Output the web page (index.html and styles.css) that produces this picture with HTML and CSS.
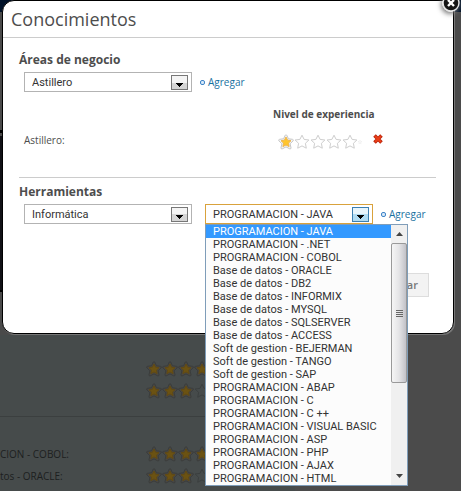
FILE: index.html
```html
<!DOCTYPE html>
<html lang="es">
<head>
<meta charset="utf-8">
<title>Conocimientos</title>
<link rel="stylesheet" href="styles.css">
</head>
<body>
<svg class="defs" aria-hidden="true">
  <symbol id="star" viewBox="0 0 16 16">
    <path d="M8 1.2l2.1 4.2 4.8.6-3.5 3.3.9 4.9L8 11.9l-4.3 2.3.9-4.9L1.1 6l4.8-.6z"/>
  </symbol>
  <symbol id="full-star" viewBox="0 0 16 16">
    <path class="halo" d="M8 .8q.6 0 .9.700l1.500 3.300 4 .5q1.600.4.600 1.600l-2.900 2.900.9 4q.1 1.500-1.300 1L8 12.900l-3.700 1.900q-1.400.5-1.300-1l.9-4L1 6.900Q0 5.700 1.600 5.300l4-.5 1.500-3.300Q7.400.8 8 .8z"/>
    <path class="core" d="M8 3l1.600 3.200 3.400.5-2.500 2.400.6 3.500L8 11l-3.100 1.600.6-3.500L3 6.700l3.400-.5z"/>
  </symbol>
  <symbol id="arrow" viewBox="0 0 15 13">
    <path d="M4 7h7v1h-1v1H9v1H8v1H7v-1H6V9H5V8H4z"/>
  </symbol>
</svg>

<main class="page">
  <div class="page-top"></div>
  <div class="page-side"></div>
  <div class="page-content">
    <section class="page-block">
      <div class="page-row"><span class="page-label"></span><span class="stars dim"><svg><use href="#full-star"/></svg><svg><use href="#full-star"/></svg><svg><use href="#full-star"/></svg><svg><use href="#full-star"/></svg></span></div>
      <div class="page-row"><span class="page-label"></span><span class="stars dim"><svg><use href="#full-star"/></svg><svg><use href="#full-star"/></svg><svg><use href="#full-star"/></svg><svg class="empty"><use href="#star"/></svg></span></div>
    </section>
    <section class="page-block">
      <div class="page-row"><span class="page-label">CION - COBOL:</span><span class="stars dim"><svg><use href="#full-star"/></svg><svg><use href="#full-star"/></svg><svg><use href="#full-star"/></svg><svg><use href="#full-star"/></svg></span></div>
      <div class="page-row"><span class="page-label">tos - ORACLE:</span><span class="stars dim"><svg><use href="#full-star"/></svg><svg><use href="#full-star"/></svg><svg><use href="#full-star"/></svg><svg class="empty"><use href="#star"/></svg></span></div>
    </section>
  </div>
</main>

<div class="dialog" role="dialog" aria-labelledby="title">
  <button class="close" type="button" aria-label="Cerrar">
    <svg viewBox="0 0 18 18"><circle cx="9" cy="9" r="8" fill="#161616" stroke="#e4e4e4" stroke-width="1.5"/><path d="M6 6l6 6M12 6l-6 6" stroke="#fff" stroke-width="2.4"/></svg>
  </button>
  <h1 id="title">Conocimientos</h1>
  <form class="dialog-body">
    <section class="areas">
      <h2><label for="area">Áreas de negocio</label></h2>
      <div class="fields">
        <div class="picker"><select id="area"><option>Astillero</option></select><svg class="arrow"><use href="#arrow"/></svg></div>
        <a class="add" href="#area">Agregar</a>
      </div>
      <div class="levels">
        <span></span><h3>Nivel de experiencia</h3>
        <span class="name">Astillero:</span>
        <div class="rating">
          <span class="stars"><svg><use href="#full-star"/></svg><svg class="empty"><use href="#star"/></svg><svg class="empty"><use href="#star"/></svg><svg class="empty"><use href="#star"/></svg><svg class="empty"><use href="#star"/></svg><svg class="empty cut"><use href="#star"/></svg></span>
          <button class="remove" type="button" aria-label="Quitar"><svg viewBox="0 0 10 10"><path d="M1.500 1.500l7 7M8.500 1.500l-7 7" stroke="#b5210a" stroke-width="3.600"/><path d="M2 2l6 6M8 2L2 8" stroke="#ea3f18" stroke-width="2.200"/></svg></button>
        </div>
      </div>
    </section>
    <section class="tools">
      <h2><label for="tool-type">Herramientas</label></h2>
      <div class="fields">
        <div class="picker"><select id="tool-type"><option>Informática</option></select><svg class="arrow"><use href="#arrow"/></svg></div>
        <div class="picker open">
          <select id="tool" aria-label="Herramienta"><option>PROGRAMACION - JAVA</option></select><svg class="arrow"><use href="#arrow"/></svg>
          <div class="menu">
            <ul role="listbox" aria-label="Herramienta">
              <li role="option" aria-selected="true">PROGRAMACION - JAVA</li>
              <li role="option">PROGRAMACION - .NET</li>
              <li role="option">PROGRAMACION - COBOL</li>
              <li role="option">Base de datos - ORACLE</li>
              <li role="option">Base de datos - DB2</li>
              <li role="option">Base de datos - INFORMIX</li>
              <li role="option">Base de datos - MYSQL</li>
              <li role="option">Base de datos - SQLSERVER</li>
              <li role="option">Base de datos - ACCESS</li>
              <li role="option">Soft de gestion - BEJERMAN</li>
              <li role="option">Soft de gestion - TANGO</li>
              <li role="option">Soft de gestion - SAP</li>
              <li role="option">PROGRAMACION - ABAP</li>
              <li role="option">PROGRAMACION - C</li>
              <li role="option">PROGRAMACION - C ++</li>
              <li role="option">PROGRAMACION - VISUAL BASIC</li>
              <li role="option">PROGRAMACION - ASP</li>
              <li role="option">PROGRAMACION - PHP</li>
              <li role="option">PROGRAMACION - AJAX</li>
              <li role="option">PROGRAMACION - HTML</li>
            </ul>
            <div class="scrollbar">
              <svg class="step" viewBox="0 0 16 18"><path d="M5 11h7L8.500 7z"/></svg>
              <div class="thumb"><i></i><i></i><i></i><i></i></div>
              <svg class="step" viewBox="0 0 16 18"><path d="M5 7h7l-3.500 4z"/></svg>
            </div>
          </div>
        </div>
        <a class="add" href="#tool">Agregar</a>
      </div>
    </section>
    <div class="actions"><button class="save" type="submit">Guardar</button></div>
  </form>
</div>
</body>
</html>
```
FILE: styles.css
```css
*, ::before { box-sizing: border-box; }
body {
  margin: 0;
  min-height: 100vh;
  overflow: hidden;
  background: #4b4b4b;
  color: #4d4d4d;
  font: 10px/14px "Open Sans", sans-serif;
}
h1, h2, h3, ul { margin: 0; padding: 0; }
button { padding: 0; font: inherit; cursor: pointer; }
svg { display: block; }
.defs { position: absolute; width: 0; height: 0; }

/* Dimmed page */
.page { height: 100vh; overflow: hidden; display: flex; flex-direction: column; }
.page-top { flex: none; height: 12px; background: #001229; }
.page-side {
  flex: none;
  height: 323px;
  background: linear-gradient(#4a4a4a 0 118px, #000 118px 121px, #4a4a4a 121px 124px, #101015 124px 278px, #000 278px 280px, #4a4a4a 280px) no-repeat left / 8px 100%;
}
.page-content {
  flex: 1;
  width: 64%;
  padding-top: 23px;
  background: #464b4b;
}
.page-block:first-child { padding-bottom: 14px; border-bottom: 1px solid #3b3f3f; }
.page-block + .page-block { padding-top: 26px; }
.page-row { display: flex; align-items: center; height: 22px; }
.page-label { width: 146px; color: #1d1f1f; }

.stars {
  --halo: #f6f6f6;
  --halo-line: #c6c6c6;
  --core: #ffc52b;
  --core-line: #efb64d;
  --empty-line: #cecece;
  display: flex;
}
.stars.dim {
  --halo: #4a4845;
  --halo-line: #3b3d3c;
  --core: #6b5212;
  --core-line: #604914;
  --empty-line: #3b3f3f;
}
.stars svg { width: 16px; height: 16px; flex: none; }
.halo { fill: var(--halo); stroke: var(--halo-line); stroke-width: 1; }
.core { fill: var(--core); stroke: var(--core-line); stroke-width: 1; }
.empty { fill: none; stroke: var(--empty-line); stroke-width: 1; }
.stars .cut { width: 4px; }
.cut use { width: 16px; height: 16px; }

/* Dialog */
.dialog {
  position: absolute;
  top: 0;
  left: 2px;
  right: 7px;
  border: 1px solid #000;
  border-radius: 12px;
  background: #fff;
  box-shadow: 1px 1px 0 #777;
}
.close {
  position: absolute;
  top: -7px;
  right: -7px;
  width: 18px;
  height: 18px;
  border: 0;
  border-radius: 50%;
  background: none;
  box-shadow: -1px 2px 5px #777;
}
h1 {
  height: 37px;
  padding: 6px 8px 0;
  border-bottom: 1px solid #ccc;
  font-size: 18px;
  line-height: 24px;
  font-weight: 500;
}
.dialog-body { display: block; padding: 14px 17px 36px 16px; }
h2 { font-size: 12px; line-height: 16px; font-weight: 700; }
.areas { height: 126px; border-bottom: 1px solid #ccc; }
.fields { display: flex; align-items: center; padding: 4px 0 0 5px; }
.picker { position: relative; width: 168px; }
.picker select {
  appearance: none;
  display: block;
  width: 100%;
  height: 20px;
  margin: 0;
  padding: 2px 7px 0;
  border: 1px solid #b3b3b3;
  border-radius: 0;
  outline: 0;
  background: #fff;
  color: #333;
  font: 11px/16px Roboto, sans-serif;
}
.arrow {
  position: absolute;
  top: 3px;
  right: 4px;
  width: 17px;
  height: 15px;
  border: 1px solid #777;
  background: linear-gradient(#f4f4f4 50%, #d5d5d5 50%);
  pointer-events: none;
}
.open { margin-left: 13px; }
.open select { border-color: #d9a23c; }
.open .arrow { border-color: #3c7fb1; background: linear-gradient(#e8f5fc 50%, #b0dcf3 50%); }
.add {
  display: flex;
  align-items: center;
  gap: 3px;
  margin-left: 8px;
  color: #17719f;
  text-decoration: none;
}
.add::before {
  content: "";
  width: 5px;
  height: 5px;
  border: 1px solid #3e84c8;
  border-radius: 2px;
  background: #d8e9f8;
}
.levels {
  display: grid;
  grid-template-columns: 254px 1fr;
  row-gap: 12px;
  padding-top: 15px;
}
h3 { font-size: 10px; line-height: 14px; font-weight: 700; }
.name { padding-left: 5px; }
.rating { display: flex; padding: 1px 0 0 5px; }
.remove { width: 10px; height: 10px; margin-left: 11px; border: 0; background: none; }
.tools { padding-top: 6px; }
.actions { display: flex; justify-content: flex-end; padding: 49px 7px 0 0; }
.save {
  width: 60px;
  height: 24px;
  padding-right: 10px;
  border: 1px solid #ddd;
  background: #f3f3f3;
  color: #777;
  font-size: 11px;
  font-weight: 600;
  text-align: right;
}

/* Open list */
.menu {
  position: absolute;
  top: 20px;
  left: 0;
  z-index: 1;
  display: flex;
  width: 203px;
  border: 1px solid #7f9db9;
  background: #fcfcfc;
}
.menu ul { flex: 1; list-style: none; color: #333; font: 11px/13px Roboto, sans-serif; }
.menu li { padding-left: 7px; white-space: nowrap; }
.menu [aria-selected] { background: #39f; color: #fff; }
.scrollbar { display: flex; flex-direction: column; width: 16px; background: #f0f0f0; }
.step { width: 16px; height: 18px; fill: #444; }
.thumb {
  display: flex;
  flex-direction: column;
  justify-content: center;
  align-items: center;
  gap: 1px;
  height: 140px;
  margin-bottom: auto;
  border: 1px solid #999;
  border-radius: 2px;
  background: linear-gradient(90deg, #f5f5f5, #e4e4e6 50%, #c2c2c8);
}
.thumb i { width: 7px; height: 1px; background: #666; }
```
